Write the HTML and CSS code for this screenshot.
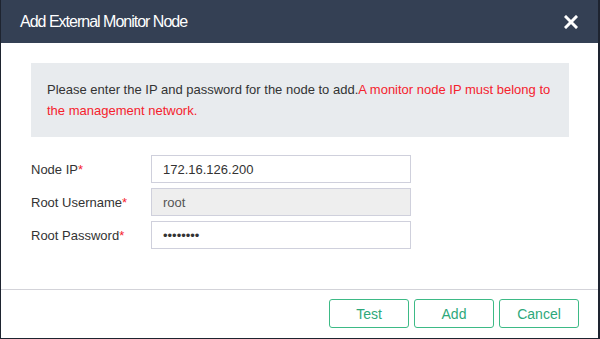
FILE: index.html
```html
<!DOCTYPE html>
<html lang="en">
<head>
    <meta charset="UTF-8">
    <title>Add External Monitor Node</title>
    <link rel="stylesheet" href="styles.css">
</head>
<body>
    <div class="dialog">
        <div class="dialog-header">
            <div class="dialog-title">Add External Monitor Node</div>
            <button class="close-btn" aria-label="Close">
                <svg width="14" height="14" viewBox="0 0 14 14">
                    <path d="M2 2 L12 12 M12 2 L2 12" stroke="#fff" stroke-width="3" stroke-linecap="square"/>
                </svg>
            </button>
        </div>

        <div class="dialog-body">
            <p class="notice">Please enter the IP and password for the node to add.<span class="warn">A monitor node IP must belong to the management network.</span></p>

            <div class="form">
                <div class="form-row">
                    <label class="form-label">Node IP<span class="req">*</span></label>
                    <input class="form-input" type="text" value="172.16.126.200">
                </div>
                <div class="form-row">
                    <label class="form-label">Root Username<span class="req">*</span></label>
                    <input class="form-input disabled" type="text" value="root" disabled>
                </div>
                <div class="form-row">
                    <label class="form-label">Root Password<span class="req">*</span></label>
                    <input class="form-input" type="password" value="password">
                </div>
            </div>
        </div>

        <div class="dialog-footer">
            <button class="btn">Test</button>
            <button class="btn">Add</button>
            <button class="btn">Cancel</button>
        </div>
    </div>
</body>
</html>
```

FILE: styles.css
```css
* {
    margin: 0;
    padding: 0;
    box-sizing: border-box;
}

body {
    font-family: 'Liberation Sans', Arial, sans-serif;
    background: #1e2430;
    width: 600px;
    height: 339px;
    overflow: hidden;
}

.dialog {
    width: 600px;
    height: 339px;
    background: white;
    border-left: 1px solid #1e2430;
    border-right: 2px solid #1e2430;
    border-bottom: 1px solid #1e2430;
    display: flex;
    flex-direction: column;
}

.dialog-header {
    height: 43px;
    background: #344054;
    display: flex;
    justify-content: space-between;
    align-items: center;
    padding: 0 20px 0 19px;
}

.dialog-title {
    color: white;
    font-size: 16px;
    letter-spacing: -1px;
}

.close-btn {
    background: none;
    border: none;
    width: 14px;
    height: 14px;
    display: flex;
    cursor: pointer;
}

.dialog-body {
    flex: 1;
    padding: 20px 29px 0 30px;
}

.notice {
    background: #e8ebee;
    padding: 16px 16px 13px 16px;
    font-size: 13px;
    line-height: 21px;
    color: #333;
    height: 74px;
}

.warn {
    color: #f5222d;
}

.form {
    margin-top: 18px;
    display: flex;
    flex-direction: column;
    gap: 5px;
}

.form-row {
    display: flex;
    align-items: center;
}

.form-label {
    width: 120px;
    font-size: 13px;
    color: #333;
}

.req {
    color: #f5222d;
}

.form-input {
    width: 260px;
    height: 28px;
    border: 1px solid #cfd0dc;
    padding: 0 11px;
    font-family: 'Liberation Sans', Arial, sans-serif;
    font-size: 13px;
    color: #333;
    background: white;
    outline: none;
}

.form-input.disabled {
    background: #eeeeee;
    color: #555;
}

.dialog-footer {
    height: 49px;
    border-top: 1px solid #d3d3d9;
    display: flex;
    justify-content: flex-end;
    align-items: center;
    gap: 5px;
    padding: 0 19px 1px 0;
}

.btn {
    width: 80px;
    height: 29px;
    border: 1px solid #3dba86;
    border-radius: 3px;
    background: white;
    color: #2ea87a;
    font-family: 'Liberation Sans', Arial, sans-serif;
    font-size: 14px;
    cursor: pointer;
}
```
